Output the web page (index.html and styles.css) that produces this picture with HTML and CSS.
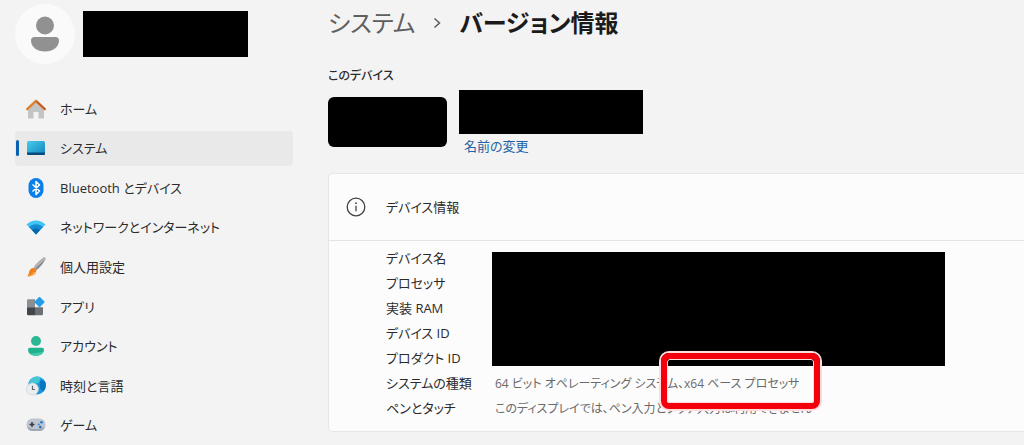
FILE: index.html
```html
<!DOCTYPE html>
<html lang="ja">
<head>
<meta charset="utf-8">
<meta name="viewport" content="width=device-width, initial-scale=1">
<title>バージョン情報</title>
<link rel="stylesheet" href="styles.css">
</head>
<body>
<div class="app">
  <aside class="sidebar">
    <div class="account">
      <span class="avatar">
        <svg width="30" height="36" viewBox="0 0 30 36" fill="#919191"><circle cx="15" cy="9.500" r="9"/><path d="M4.500 21h21a3.500 3.500 0 0 1 3.500 3.500C29 31 23 35.500 15 35.500S1 31 1 24.500A3.500 3.500 0 0 1 4.500 21z"/></svg>
      </span>
      <span class="redacted account-name"></span>
    </div>
    <nav class="nav">
      <a class="nav-item" href="#">
        <svg class="icon" viewBox="0 0 20 20"><path d="M2 9 10 3l8 6v10.500h-5.500V13h-5v6.500H2z" fill="#c3c4c6"/><path d="M1.200 10.200 10 1.800l8.800 8.400" fill="none" stroke="#d9812f" stroke-width="2.400" stroke-linecap="round" stroke-linejoin="round"/><path d="m11 2.800 7.800 7.400" stroke="#c4572a" stroke-width="1.600" stroke-linecap="round"/></svg>
        ホーム</a>
      <a class="nav-item selected" href="#" aria-current="page">
        <svg class="icon" viewBox="0 0 20 20"><defs><linearGradient id="screen" x1="0" y1="0" x2="1" y2="1"><stop offset="0" stop-color="#45cdea"/><stop offset="1" stop-color="#1483c0"/></linearGradient></defs><rect x="1" y="3" width="18" height="14" rx="1.500" fill="url(#screen)"/><path d="M1 14.500h18v1a1.500 1.500 0 0 1-1.500 1.500h-15A1.500 1.500 0 0 1 1 15.500z" fill="#064b7c"/></svg>
        システム</a>
      <a class="nav-item" href="#">
        <svg class="icon" viewBox="0 0 20 20"><rect x="2.500" width="15" height="20" rx="7.500" fill="#0a7fe8"/><path d="m6.500 6.500 7 6.500-3.500 3.500v-13L13.500 7l-7 6.500" fill="none" stroke="#fff" stroke-width="1.500" stroke-linejoin="round"/></svg>
        Bluetooth とデバイス</a>
      <a class="nav-item" href="#">
        <svg class="icon" viewBox="0 0 20 20"><path d="M.5 7.500C6 2.200 14 2.200 19.500 7.500L10 17.500z" fill="#42c5f3"/><path d="M3 10c4.200-3.800 9.800-3.800 14 0l-7 7.500z" fill="#168bd3"/><path d="M6 13.100c2.500-2.100 5.500-2.100 8 0l-4 4.400z" fill="#0765aa"/></svg>
        ネットワークとインターネット</a>
      <a class="nav-item" href="#">
        <svg class="icon" viewBox="0 0 20 20"><path d="M17.500.8c1.300-.8 2.400.3 1.700 1.700-2 4-5 7.500-8.500 10.500l-3-2.600C10.500 6.500 14 3 17.500.8z" fill="#85888c"/><path d="M17.500.8c1.300-.8 2.400.3 1.700 1.700L9 11.700l-1.300-1.300C10.500 6.500 14 3 17.500.8z" fill="#b1b3b6"/><path d="M6.800 11c2-.5 4 1.300 3.400 3.500C9.400 18 5 19.700 1 19.200c1.500-1 1.600-2.400 2.200-4.500.5-2 1.700-3.300 3.600-3.700z" fill="#ef7f1b"/><path d="M1 19.200c3-.2 5.500-1.700 7-4.500l2.100.5C9 18.500 4.700 19.700 1 19.200z" fill="#fbb04b"/></svg>
        個人用設定</a>
      <a class="nav-item" href="#">
        <svg class="icon" viewBox="0 0 20 20"><path d="M1 3.500A1.200 1.200 0 0 1 2.200 2.300H9v8H1z" fill="#8b8e91"/><path d="M1 10.300h8v8H2.200A1.200 1.200 0 0 1 1 17.100z" fill="#42464b"/><path d="M9 10.300h8v6.800a1.200 1.200 0 0 1-1.200 1.200H9z" fill="#6c7074"/><rect x="9.700" y="1.200" width="7.600" height="7.600" rx="1" transform="rotate(45 13.500 5)" fill="#249de9"/></svg>
        アプリ</a>
      <a class="nav-item" href="#">
        <svg class="icon" viewBox="0 0 20 20"><circle cx="10" cy="5" r="5" fill="#2bb795"/><path d="M4 11.800h12a2 2 0 0 1 2 2c0 3.700-3.500 6-8 6s-8-2.300-8-6a2 2 0 0 1 2-2z" fill="#20b28c"/><path d="M2.300 15.500c1.500 3 4.200 2.600 15.400 0-1 2.800-4 4.300-7.700 4.300s-6.700-1.500-7.700-4.300z" fill="#45c9ac"/></svg>
        アカウント</a>
      <a class="nav-item" href="#">
        <svg class="icon" viewBox="0 0 20 20"><circle cx="11" cy="9.500" r="9" fill="#1c95d8"/><path d="M4 4.500C7 0 12-.5 15 1.500L12.500 7 8 8 3 8.500z" fill="#43c6d8"/><path d="M14 5c3-1 4.500-.5 5.500 1.500.9 3-.1 7-2.500 9l-3-3z" fill="#0876c2"/><circle cx="6.500" cy="13" r="6" fill="#ecedef" stroke="#c9cdd1" stroke-width=".6"/><path d="M6.500 9.800v3.700H9" fill="none" stroke="#62666b" stroke-width="1.200"/></svg>
        時刻と言語</a>
      <a class="nav-item" href="#">
        <svg class="icon" viewBox="0 0 20 20"><rect x=".5" y="3.500" width="19" height="12.500" rx="6" fill="#bfc6cf"/><path d="M1 11c2 4 16 4 18 0-.5 3-2.500 5-5.500 5h-7c-3 0-5-2-5.500-5z" fill="#9fa8b5"/><path d="M6 7v5M3.500 9.500h5" stroke="#383d43" stroke-width="1.500"/><circle cx="15.500" cy="7.300" r="1.300" fill="#1e7bd1"/><circle cx="12.700" cy="9.500" r="1.100" fill="#3790dd"/><circle cx="14.300" cy="12" r="1.300" fill="#1e6fc3"/></svg>
        ゲーム</a>
    </nav>
  </aside>

  <main class="content">
    <h1 class="breadcrumb">
      <a class="crumb" href="#">システム</a>
      <svg class="chevron" width="8" height="12" viewBox="0 0 8 12"><path d="m1.500 1.500 5 4.500-5 4.500" fill="none" stroke="#5c5c5c" stroke-width="1.500"/></svg>
      <span>バージョン情報</span>
    </h1>
    <h2 class="section-title">このデバイス</h2>
    <div class="device">
      <span class="redacted device-picture"></span>
      <div class="device-text">
        <span class="redacted device-name"></span>
        <a class="rename" href="#">名前の変更</a>
      </div>
    </div>

    <section class="card">
      <header class="card-header">
        <svg width="20" height="20" viewBox="0 0 20 20"><circle cx="10" cy="10" r="8.800" fill="none" stroke="#444" stroke-width="1.300"/><path d="M10 8.800v5.400" stroke="#444" stroke-width="1.300"/><circle cx="10" cy="6.200" r=".9" fill="#444"/></svg>
        <h3 class="card-title">デバイス情報</h3>
      </header>
      <dl class="specs">
        <dt>デバイス名</dt>
        <dt>プロセッサ</dt>
        <dt>実装 RAM</dt>
        <dt>デバイス ID</dt>
        <dt>プロダクト ID</dt>
        <dd class="redacted specs-hidden"></dd>
        <dt>システムの種類</dt>
        <dd class="marked">64 ビット オペレーティング システム、x64 ベース プロセッサ<span class="marker"></span></dd>
        <dt>ペンとタッチ</dt>
        <dd>このディスプレイでは、ペン入力とタッチ入力は利用できません</dd>
      </dl>
    </section>
  </main>
</div>
</body>
</html>
```
FILE: styles.css
```css
* {
  box-sizing: border-box;
}

body {
  margin: 0;
  background: #f3f3f3;
  color: #2b2b2b;
  font: 13px/20px "Open Sans", "Noto Sans CJK JP", sans-serif;
  font-feature-settings: "palt";
}

h1, h2, h3, dl, dd {
  margin: 0;
}

a {
  color: inherit;
  text-decoration: none;
}

.redacted {
  display: block;
  background: #000;
}

.app {
  display: flex;
  min-height: 100vh;
  overflow: hidden;
}

.sidebar {
  display: flex;
  flex-direction: column;
  flex: none;
  width: 328px;
  padding: 4px 35px 0 15px;
}

.account {
  display: flex;
  align-items: center;
  gap: 8px;
  height: 60px;
  margin-bottom: 25px;
}

.avatar {
  display: grid;
  place-items: center;
  width: 60px;
  height: 60px;
  border-radius: 50%;
  background: #fafafa;
}

.account-name {
  width: 165px;
  height: 46px;
}

.nav {
  display: grid;
  flex: 1;
  grid-auto-rows: 1fr;
}

.nav-item {
  position: relative;
  display: flex;
  align-items: center;
  gap: 14px;
  margin: 2px 0;
  padding-left: 11px;
  border-radius: 4px;
  white-space: nowrap;
}

.selected {
  background: #e9e9e9;
}

.selected::before {
  content: "";
  position: absolute;
  left: 1px;
  width: 3px;
  height: 16px;
  border-radius: 2px;
  background: #0a62b0;
}

.icon {
  flex: none;
  width: 20px;
  height: 20px;
}

.content {
  flex: 1;
  min-width: 0;
}

.breadcrumb {
  display: flex;
  align-items: center;
  gap: 18px;
  padding-top: 5px;
  font-size: 24px;
  font-weight: 600;
  line-height: 36px;
  color: #1b1b1b;
}

.crumb {
  font-weight: 400;
  color: #5f5f5f;
}

.section-title {
  margin-top: 25px;
  font-size: 12px;
  font-weight: 500;
  line-height: 20px;
}

.device {
  display: flex;
  gap: 12px;
  margin-top: 4px;
}

.device-picture {
  width: 119px;
  height: 50px;
  margin-top: 7px;
  border-radius: 6px;
}

.device-name {
  width: 184px;
  height: 44px;
}

.rename {
  display: block;
  margin: 2px 5px 0;
  color: #1f62a5;
}

.card {
  margin-top: 17px;
  border: 1px solid #e6e6e6;
  border-right: 0;
  border-radius: 5px 0 0 5px;
  background: #fcfcfc;
}

.card-header {
  display: flex;
  align-items: center;
  gap: 20px;
  height: 67px;
  padding-left: 17px;
  border-bottom: 1px solid #e4e4e4;
}

.card-title {
  font-size: 13px;
  font-weight: 400;
}

.specs {
  display: grid;
  grid-template-columns: 109px 1fr;
  padding: 5px 0 10px 57px;
  line-height: 25px;
  white-space: nowrap;
}

.specs dt {
  grid-column: 1;
}

.specs dd {
  grid-column: 2;
  font-size: 12px;
  color: #6a6a6a;
}

.specs .specs-hidden {
  grid-row: 1 / 6;
  margin: 6px 79px 5px -3px;
}

.marked {
  position: relative;
}

.marker {
  position: absolute;
  top: -20px;
  left: 164px;
  width: 163px;
  height: 60px;
  border: 2px solid #ffdcdc;
  border-radius: 10px;
}

.marker::before {
  content: "";
  position: absolute;
  inset: 0;
  border: 6px solid #f4000c;
  border-radius: 8px;
}

.marker::after {
  content: "";
  position: absolute;
  inset: 6px;
  border: 1px solid #ffdcdc;
  border-radius: 3px;
}
```
